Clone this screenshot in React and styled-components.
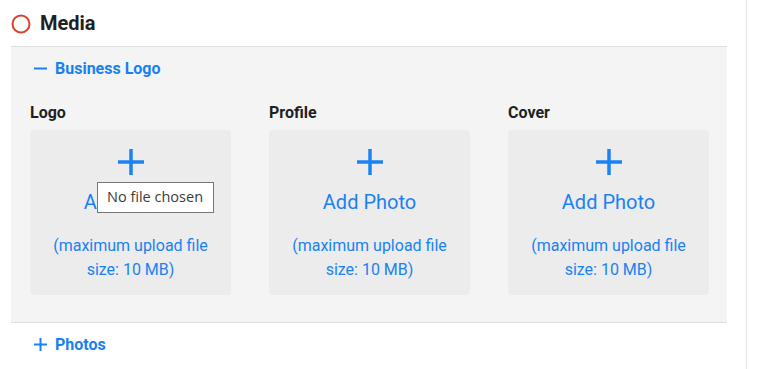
import styled, { createGlobalStyle } from "styled-components";

const GlobalStyle = createGlobalStyle`
  html, body {
    margin: 0;
    padding: 0;
    background: #fff;
    font-family: Roboto, "Liberation Sans", sans-serif;
  }
`

const Page = styled.div`
  display: flex;
  height: 369px;
  overflow: hidden;
`

const Main = styled.div`
  width: 747px;
  border-right: 1px solid #e3e3e6;
  box-sizing: border-box;
  padding: 0 19px 0 11px;
`

const Title = styled.h2`
  display: flex;
  align-items: center;
  gap: 9px;
  margin: 0;
  height: 46px;
  font-size: 20px;
  font-weight: 700;
  color: #1f1f23;
  svg {
    margin-top: 2px;
  }
`

const Section = styled.section`
  background: #f4f4f4;
  border-top: 1px solid #dedde3;
  border-bottom: 1px solid #dedde3;
  padding: 0 19px 27px;
`

const Toggle = styled.div`
  display: flex;
  align-items: center;
  gap: 8px;
  box-sizing: border-box;
  height: ${p => p.$h || 45}px;
  padding: 0 0 ${p => p.$bottom || 2}px ${p => p.$pad || 4}px;
  color: #1a7ff0;
  font-size: 16px;
  font-weight: 700;
`

const Grid = styled.div`
  display: grid;
  grid-template-columns: repeat(3, 201px);
  column-gap: 38px;
  padding-top: 12px;
`

const Field = styled.div`
  display: flex;
  flex-direction: column;
`

const Label = styled.div`
  font-size: 16px;
  font-weight: 700;
  color: #1f1f23;
  height: 26px;
  line-height: 18px;
`

const Drop = styled.div`
  position: relative;
  height: 165px;
  border-radius: 4px;
  background: #ececec;
  display: flex;
  flex-direction: column;
  align-items: center;
  color: #1a82f2;
  text-align: center;
  padding-top: 19px;
  box-sizing: border-box;
`

const AddText = styled.div`
  font-size: 20px;
  margin-top: 15px;
  line-height: 24px;
`

const Hint = styled.div`
  font-size: 16px;
  line-height: 24px;
  margin-top: 20px;
`

const Tooltip = styled.div`
  position: absolute;
  left: 67px;
  top: 52px;
  background: #fff;
  border: 1px solid #767676;
  color: #3c3c3c;
  font-family: "Open Sans", "Liberation Sans", sans-serif;
  font-size: 14.5px;
  padding: 5px 10px 6px 9px;
  white-space: nowrap;
  line-height: 18px;
`

const Plus = ({ size = 26, w = 3.5 }) => (
  <svg width={size} height={size} viewBox={`0 0 ${size} ${size}`}>
    <path
      d={`M${size / 2} 0V${size}M0 ${size / 2}H${size}`}
      stroke="#1a82f2"
      strokeWidth={w}
    />
  </svg>
)

const Minus = () => (
  <svg width="13" height="13" viewBox="0 0 13 13">
    <path d="M0 6.5H13" stroke="#1a7ff0" strokeWidth="2" />
  </svg>
)

const fields = [
  { label: "Logo", tip: true },
  { label: "Profile" },
  { label: "Cover" },
]

export default function App() {
  return (
    <Page>
      <GlobalStyle />
      <Main>
        <Title>
          <svg width="20" height="20" viewBox="0 0 20 20">
            <circle cx="10" cy="10" r="8.5" fill="none" stroke="#d8432e" strokeWidth="2" />
          </svg>
          Media
        </Title>
        <Section>
          <Toggle>
            <Minus />
            Business Logo
          </Toggle>
          <Grid>
            {fields.map(f => (
              <Field key={f.label}>
                <Label>{f.label}</Label>
                <Drop>
                  <Plus />
                  <AddText>Add Photo</AddText>
                  <Hint>
                    (maximum upload file
                    <br />
                    size: 10 MB)
                  </Hint>
                  {f.tip && <Tooltip>No file chosen</Tooltip>}
                </Drop>
              </Field>
            ))}
          </Grid>
        </Section>
        <Toggle $h={46} $pad={23} $bottom={4}>
          <Plus size={13} w={2} />
          Photos
        </Toggle>
      </Main>
    </Page>
  )
}
